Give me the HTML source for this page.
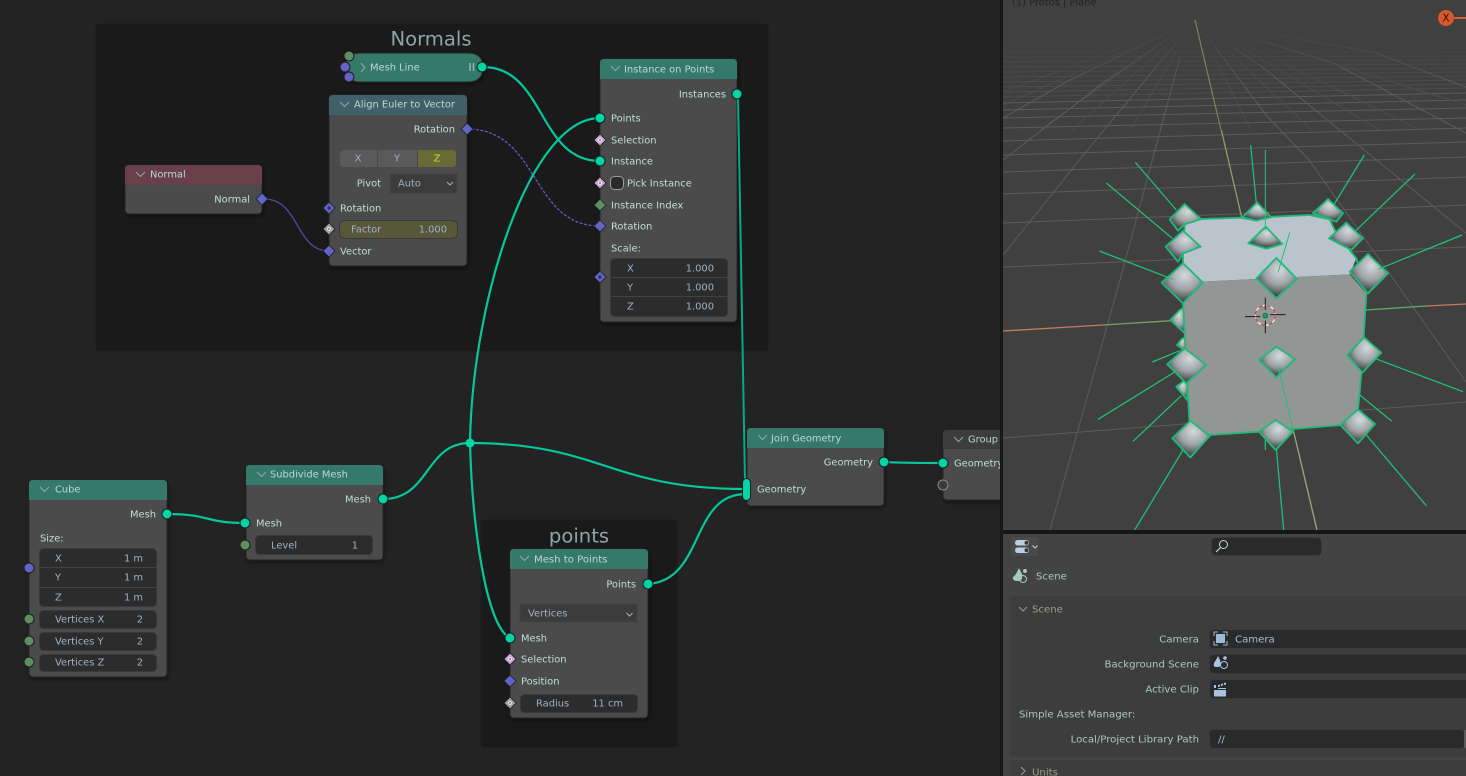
<!DOCTYPE html>
<html><head><meta charset="utf-8"><style>
html,body{margin:0;padding:0;background:#232323;width:1466px;height:776px;overflow:hidden}
svg{display:block;position:absolute;left:0;top:0;filter:blur(.3px)}
text{font-family:"DejaVu Sans","Liberation Sans",sans-serif;font-size:9.9px;fill:#bfdfd9;white-space:pre;transform:translateY(-.5px)}
.h{fill:#bcd8d2}.v{fill:#a0b1c4}.e{text-anchor:end}.m{text-anchor:middle}
.t{font-size:19.6px;fill:#8fa5a5;text-anchor:middle}
.p{fill:#a9c8bc;font-size:10.150px}.pe{fill:#a9c8bc;text-anchor:end;font-size:10.150px}.pv{fill:#a9bdd0;font-size:10.150px}.ph{fill:#9d9d8a;font-size:10.150px}
.ch{fill:none;stroke:#90aaa6;stroke-width:1}
.n{fill:#4b4b4b;stroke:#262626;stroke-width:1;filter:url(#sh)}
.w{fill:none;stroke:#06c69b;stroke-width:2.2}
.f{fill:#2a2a2a;stroke:#3a3a3a;stroke-width:1}
.sp{fill:none;stroke:#1fc07a;stroke-width:3.8}
.d{fill:url(#dg);stroke:#1fba78;stroke-width:5.5;stroke-linejoin:round}
.g{stroke:#5c5c5c;stroke-width:1;fill:none}
.g2{stroke:#505050;stroke-width:.8;fill:none}
</style></head><body>
<svg width="1466" height="776" viewBox="0 0 1466 776" xmlns="http://www.w3.org/2000/svg">
<defs>
<filter id="sh" x="-10%" y="-10%" width="125%" height="125%"><feDropShadow dx="1" dy="2" stdDeviation="2" flood-color="#000" flood-opacity=".45"/></filter>
<radialGradient id="dg" cx=".56" cy=".3" r=".72"><stop offset="0" stop-color="#d4dadc"/><stop offset=".5" stop-color="#9da3a6"/><stop offset=".85" stop-color="#4a4f52"/><stop offset="1" stop-color="#33383a"/></radialGradient>
<linearGradient id="fade" x1="0" y1="0" x2="0" y2="1"><stop offset="0" stop-color="#404040" stop-opacity="1"/><stop offset=".3" stop-color="#404040" stop-opacity=".9"/><stop offset="1" stop-color="#404040" stop-opacity="0"/></linearGradient>
<clipPath id="vp"><rect x="1003" y="0" width="463" height="530"/></clipPath>
<clipPath id="ed"><rect x="0" y="0" width="1000" height="776"/></clipPath>
<g id="sg"><circle r="5" fill="#00d6a3" stroke="#1d1d1d" stroke-width="1"/></g>
<g id="sb"><circle r="5" fill="#6363c7" stroke="#1d1d1d" stroke-width="1"/></g>
<g id="si"><circle r="5" fill="#5f8f5f" stroke="#1d1d1d" stroke-width="1"/></g>
<g id="db"><polygon points="0,-6 6,0 0,6 -6,0" fill="#6363c7" stroke="#1d1d1d" stroke-width=".8"/></g>
<g id="dbd"><polygon points="0,-6 6,0 0,6 -6,0" fill="#6363c7" stroke="#1d1d1d" stroke-width=".8"/><circle r="1.6" fill="#2b2b55"/></g>
<g id="dp"><polygon points="0,-6 6,0 0,6 -6,0" fill="#cca6d6" stroke="#1d1d1d" stroke-width=".8"/><circle r="1.9" fill="#f2edf4"/><circle r=".9" fill="#555"/></g>
<g id="dw"><polygon points="0,-6 6,0 0,6 -6,0" fill="#a1a1a1" stroke="#1d1d1d" stroke-width=".8"/><circle r="1.9" fill="#eee"/><circle r=".9" fill="#555"/></g>
<g id="dg2"><polygon points="0,-6 6,0 0,6 -6,0" fill="#5f8f5f" stroke="#1d1d1d" stroke-width=".8"/></g>
</defs>

<rect x="0" y="0" width="1000" height="776" fill="#232323"/>
<g clip-path="url(#ed)">
<!-- frames -->
<rect x="95.500" y="23.500" width="673" height="328" rx="4" fill="#1a1a1a" stroke="#1f1f1f"/>
<rect x="480.500" y="519.500" width="197" height="228" rx="4" fill="#1a1a1a" stroke="#1f1f1f"/>
<text class="t" x="431" y="46">Normals</text>
<text class="t" x="579" y="543">points</text>

<!-- Normal -->
<rect class="n" x="125" y="165" width="137" height="49" rx="4"/>
<path d="M125 185V169Q125 165 129 165H258Q262 165 262 169V185Z" fill="#693f4c"/>
<path class="ch" d="M136 172l4.500 4.500 4.500-4.500"/>
<text class="h" x="150" y="178">Normal</text>
<text class="e" x="250" y="203">Normal</text>

<!-- Align Euler -->
<rect class="n" x="329" y="95" width="138" height="171" rx="4"/>
<path d="M329 115V99Q329 95 333 95H463Q467 95 467 99V115Z" fill="#3f6068"/>
<path class="ch" d="M340 102l4.500 4.500 4.500-4.500"/>
<text class="h" x="354" y="108">Align Euler to Vector</text>
<text class="e" x="455" y="133">Rotation</text>
<path d="M344 150H377V167H344Q340 167 340 163V154Q340 150 344 150Z" fill="#5a5a5a"/>
<rect x="378" y="150" width="39" height="17" fill="#5a5a5a"/>
<path d="M418 150H452Q456 150 456 154V163Q456 167 452 167H418Z" fill="#686b36"/>
<text class="v m" x="358" y="162">X</text><text class="v m" x="397" y="162">Y</text>
<text class="m" x="437" y="162" style="fill:#d6d62a">Z</text>
<text class="e" x="381" y="187">Pivot</text>
<rect x="390" y="174" width="67" height="19" fill="#3c3c3c" stroke="#434343"/>
<text class="v" x="398" y="187">Auto</text>
<path d="M447 182l3 3 3-3" fill="none" stroke="#a2b3c6"/>
<text x="340" y="212">Rotation</text>
<rect x="339.500" y="220.500" width="118" height="18" rx="5" fill="#57573a" stroke="#393939"/>
<text class="v" x="351" y="233">Factor</text><text class="v e" x="447" y="233">1.000</text>
<text x="340" y="255">Vector</text>

<!-- Instance on Points -->
<rect class="n" x="600" y="59" width="137" height="263" rx="4"/>
<path d="M600 79V63Q600 59 604 59H733Q737 59 737 63V79Z" fill="#35796a"/>
<path class="ch" d="M611 66l4.500 4.500 4.500-4.500"/>
<text class="h" x="624" y="73">Instance on Points</text>
<text class="e" x="726" y="98">Instances</text>
<text x="611" y="122">Points</text>
<text x="611" y="144">Selection</text>
<text x="611" y="165">Instance</text>
<rect x="610.500" y="176.500" width="13" height="13" rx="4" fill="#2b2b2b" stroke="#9a9a9a"/>
<text x="627" y="187">Pick Instance</text>
<text x="611" y="209">Instance Index</text>
<text x="611" y="230">Rotation</text>
<text x="611" y="252">Scale:</text>
<rect x="610.500" y="258.500" width="117" height="58" rx="4" fill="#2c2c2c" stroke="#393939"/>
<path d="M611 277.500H727M611 296.500H727" stroke="#424242"/>
<text class="v" x="627" y="272">X</text><text class="v e" x="714" y="272">1.000</text>
<text class="v" x="627" y="291">Y</text><text class="v e" x="714" y="291">1.000</text>
<text class="v" x="627" y="310">Z</text><text class="v e" x="714" y="310">1.000</text>

<!-- Cube -->
<rect class="n" x="29" y="480" width="138" height="197" rx="4"/>
<path d="M29 500V484Q29 480 33 480H163Q167 480 167 484V500Z" fill="#35796a"/>
<path class="ch" d="M40 487l4.500 4.500 4.500-4.500"/>
<text class="h" x="55" y="493">Cube</text>
<text class="e" x="156" y="518">Mesh</text>
<text x="40" y="542">Size:</text>
<rect x="39.500" y="548.500" width="117" height="58" rx="4" fill="#2c2c2c" stroke="#393939"/>
<path d="M40 567.500H156M40 587.500H156" stroke="#424242"/>
<text class="v" x="55" y="562">X</text><text class="v e" x="143" y="562">1 m</text>
<text class="v" x="55" y="581">Y</text><text class="v e" x="143" y="581">1 m</text>
<text class="v" x="55" y="601">Z</text><text class="v e" x="143" y="601">1 m</text>
<rect x="39.500" y="610.500" width="117" height="18" rx="4" fill="#2c2c2c" stroke="#393939"/>
<rect x="39.500" y="632.500" width="117" height="18" rx="4" fill="#2c2c2c" stroke="#393939"/>
<rect x="39.500" y="654.500" width="117" height="17" rx="4" fill="#2c2c2c" stroke="#393939"/>
<text class="v" x="55" y="623">Vertices X</text><text class="v e" x="143" y="623">2</text>
<text class="v" x="55" y="645">Vertices Y</text><text class="v e" x="143" y="645">2</text>
<text class="v" x="55" y="666">Vertices Z</text><text class="v e" x="143" y="666">2</text>

<!-- Subdivide -->
<rect class="n" x="246" y="465" width="137" height="95" rx="4"/>
<path d="M246 485V469Q246 465 250 465H379Q383 465 383 469V485Z" fill="#35796a"/>
<path class="ch" d="M257 472l4.500 4.500 4.500-4.500"/>
<text class="h" x="270" y="478">Subdivide Mesh</text>
<text class="e" x="371" y="503">Mesh</text>
<text x="256" y="527">Mesh</text>
<rect x="255.500" y="535.500" width="117" height="19" rx="4" fill="#2c2c2c" stroke="#393939"/>
<text class="v" x="271" y="549">Level</text><text class="v e" x="358" y="549">1</text>

<!-- Mesh to Points -->
<rect class="n" x="510" y="549" width="138" height="169" rx="4"/>
<path d="M510 569V553Q510 549 514 549H644Q648 549 648 553V569Z" fill="#35796a"/>
<path class="ch" d="M520 556l4.500 4.500 4.500-4.500"/>
<text class="h" x="534" y="563" style="font-size:10.100px">Mesh to Points</text>
<text class="e" x="636" y="588">Points</text>
<rect x="520" y="604" width="117" height="18" fill="#3c3c3c" stroke="#434343"/>
<text class="v" x="528" y="617">Vertices</text>
<path d="M626.500 613l3 3 3-3" fill="none" stroke="#a2b3c6"/>
<text x="521" y="642">Mesh</text>
<text x="521" y="663">Selection</text>
<text x="521" y="685">Position</text>
<rect x="520.500" y="694.500" width="117" height="18" rx="4" fill="#2c2c2c" stroke="#393939"/>
<text class="v" x="536" y="707">Radius</text><text class="v e" x="623" y="707">11 cm</text>

<!-- Join Geometry -->
<rect class="n" x="747" y="428" width="137" height="78" rx="4"/>
<path d="M747 448V432Q747 428 751 428H880Q884 428 884 432V448Z" fill="#35796a"/>
<path class="ch" d="M758 435l4.500 4.500 4.500-4.500"/>
<text class="h" x="771" y="442">Join Geometry</text>
<text class="e" x="873" y="466">Geometry</text>
<text x="757" y="493">Geometry</text>

<!-- Group -->
<rect class="n" x="943" y="430" width="80" height="70" rx="4"/>
<path d="M943 449V434Q943 430 947 430H1019Q1023 430 1023 434V449Z" fill="#3d3d3d"/>
<path class="ch" d="M954 437l4.500 4.500 4.500-4.500"/>
<text class="h" x="968" y="443">Group</text>
<text x="954" y="467">Geometry</text>

<!-- Mesh Line collapsed -->
<path d="M360 53H468Q483 53 483 67Q483 82 468 82H360Q345 82 345 67Q345 53 360 53Z" fill="#35796a" stroke="#262626" filter="url(#sh)"/>
<path d="M361 63l4 4.500-4 4.500" class="ch"/>
<text class="h" x="370" y="71">Mesh Line</text>
<path d="M470 63V71M473.500 63V71" stroke="#8fb8ac" stroke-width="1.500"/>

<!-- wires -->
<path d="M264 199C300 199 295 251 329 251" fill="none" stroke="#4f4aa8" stroke-width="1.300"/>
<path d="M467 129C540 129 530 226 600 226" fill="none" stroke="#5f5ac2" stroke-width="1.300" stroke-dasharray="3 1.500"/>
<path class="w" d="M483 67C545 67 538 161 600 161"/>
<path class="w" d="M167 514C210 514 205 523 245 523"/>
<path class="w" d="M383 499C430 499 425 443 470 443"/>
<path class="w" d="M470 443C472 300 530 118 600 118"/>
<path class="w" d="M470 443C600 443 610 489 745 489"/>
<path class="w" d="M470 443C472 520 485 625 510 638"/>
<path d="M738 94L745 482" fill="none" stroke="#06a988" stroke-width="2"/>
<path class="w" d="M648 584C705 580 690 494 746 494"/>
<path class="w" d="M884 462C905 463 920 463 943 463"/>
<circle cx="470" cy="443" r="4.500" fill="#00d6a3"/>

<!-- sockets -->
<use href="#si" x="349" y="56"/><use href="#sb" x="345" y="67"/><use href="#sb" x="349" y="77"/>
<use href="#sg" x="482" y="67"/>
<use href="#db" x="262" y="199"/>
<use href="#db" x="467" y="129"/>
<use href="#dbd" x="329" y="208"/>
<use href="#dw" x="329" y="229"/>
<use href="#db" x="329" y="251"/>
<use href="#sg" x="737" y="94"/>
<use href="#sg" x="600" y="118"/>
<use href="#dp" x="600" y="140"/>
<use href="#sg" x="600" y="161"/>
<use href="#dp" x="600" y="183"/>
<use href="#dg2" x="600" y="205"/>
<use href="#db" x="600" y="226"/>
<use href="#dbd" x="600" y="277"/>
<use href="#sg" x="167" y="514"/>
<use href="#sb" x="29" y="568"/>
<use href="#si" x="29" y="619"/><use href="#si" x="29" y="641"/><use href="#si" x="29" y="662"/>
<use href="#sg" x="245" y="523"/>
<use href="#si" x="245" y="545"/>
<use href="#sg" x="383" y="499"/>
<use href="#sg" x="648" y="584"/>
<use href="#sg" x="510" y="638"/>
<use href="#dp" x="510" y="659"/>
<use href="#db" x="510" y="681"/>
<use href="#dw" x="510" y="703"/>
<rect x="742.500" y="478.500" width="8" height="22" rx="4" fill="#00d6a3" stroke="#1d1d1d"/>
<use href="#sg" x="884" y="462"/>
<use href="#sg" x="943" y="463"/>
<circle cx="943" cy="485" r="5" fill="#3a3a3a" stroke="#8a8a8a"/>
</g>

<!-- separators -->
<rect x="1000" y="0" width="3" height="776" fill="#181818"/>

<!-- viewport -->
<g clip-path="url(#vp)">
<rect x="1003" y="0" width="463" height="530" fill="#404040"/>
<!-- grid horizontals -->
<g class="g">
<path d="M1003 438L1466 402M1003 267L1466 247M1003 223L1466 205M1003 194L1466 177M1003 172L1466 157M1003 155L1466 142M1003 141L1466 128M1003 128L1466 118M1003 118L1466 108M1003 110L1466 100M1003 103L1466 93"/>
</g>
<g class="g2">
<path d="M1003 97L1466 88M1003 92L1466 84M1003 87L1466 80M1003 82L1466 76M1003 77L1466 72M1003 72L1466 68M1003 67L1466 64M1003 62L1466 60M1003 57L1466 56M1003 52L1466 52"/>
<path d="M1195 20L1003 92M1195 20L1003 105M1195 20L1040 130M1195 20L1072 130M1195 20L1130 130M1195 20L1251 130M1195 20L1312 130M1195 20L1380 130M1195 20L1420 130M1195 20L1466 105"/>
</g>
<!-- grid radials -->
<g class="g">
<path d="M1050 530L1120 280L1180 57M1003 255L1053 193L1085 153L1195 20M1003 160L1103 83L1195 20M1003 118L1070 80L1195 20M1195 20L1266 115L1309 160L1394 280L1466 382M1195 20L1266 70L1466 233M1195 20L1333 63L1466 133M1195 20L1376 53L1466 87"/>
</g>
<rect x="1003" y="10" width="463" height="75" fill="url(#fade)"/>
<text x="1012" y="6" style="fill:#1c1c1c;font-size:9.9px;opacity:.8">(1) Protos | Plane</text>
<!-- axes -->
<path d="M1195 20L1221 130" stroke="#6e8a56" stroke-width="1.200" fill="none"/>
<g transform="translate(1003 130) scale(.33333)">
<path d="M655 0L716 262" stroke="#8a9e66" stroke-width="4" fill="none"/>
<path d="M870 897L942 1200" stroke="#94a873" stroke-width="4" fill="none"/>
<path d="M0 603L300 585" stroke="#c67a5e" stroke-width="4" fill="none"/>
<path d="M300 585L505 572" stroke="#7d9c5e" stroke-width="4" fill="none"/>
<path d="M1088 540L1270 528" stroke="#5fae66" stroke-width="4" fill="none"/>
<path d="M1270 528L1389 522" stroke="#c67a5e" stroke-width="4" fill="none"/>
<!-- spikes -->
<path class="sp" d="M397 97L520 240M310 159L508 325M289 363L510 448M743 45L760 220M1084 75L992 225M1236 132L1055 305M1377 315L1125 418M448 696L530 662M285 868L525 720M390 934L535 797M395 1200L540 960M842 1200L820 955M787 960L787 930M1270 1127L1090 915M1166 873L1070 795M1380 785L1115 685"/>
<!-- back diamonds -->
<polygon class="d" points="545,222 595,268 545,283 525,302 500,268"/>
<polygon class="d" points="762,217 805,262 760,272 718,262"/>
<polygon class="d" points="975,207 1020,250 1000,275 930,250"/>
<polygon class="d" points="530,540 548,530 548,612 502,570"/>
<polygon class="d" points="535,628 550,620 550,665 522,645"/>
<polygon class="d" points="520,770 553,745 553,810"/>
<!-- cube -->
<path d="M545 283L595 267L715 263L760 272L810 260L920 255L980 268L1000 310L1060 385L1040 433L600 455L540 460L540 370Z" fill="#b9c4cc"/>
<path d="M600 455L1040 433L1090 490L1082 620L1075 730L1065 840L1015 885L870 897L770 905L620 915L560 885L553 760L545 610L540 520Z" fill="#929695"/>
<path d="M545 283L595 267L715 263L760 272L810 260L920 255L980 268L1000 310L1060 385L1090 490L1082 620L1075 730L1065 840L1015 885L870 897L770 905L620 915L560 885L553 760L545 610L540 520L540 370Z" fill="none" stroke="#1fba78" stroke-width="5.500" stroke-linejoin="round"/>
<!-- front diamonds -->
<polygon class="d" points="1030,278 1080,325 1045,360 978,325"/>
<polygon class="d" points="540,302 593,350 540,370 525,395 488,350"/>
<polygon class="d" points="788,290 838,342 790,356 736,340"/>
<polygon class="d" points="540,400 600,458 540,520 476,458"/>
<polygon class="d" points="820,384 882,447 820,505 760,445"/>
<polygon class="d" points="1095,372 1155,430 1095,490 1040,425"/>
<polygon class="d" points="545,655 610,705 550,760 493,703"/>
<polygon class="d" points="820,650 876,687 820,742 768,690"/>
<polygon class="d" points="1083,622 1135,668 1078,728 1033,675"/>
<polygon class="d" points="562,872 620,918 562,982 508,925"/>
<polygon class="d" points="818,870 870,905 818,960 768,905"/>
<polygon class="d" points="1065,838 1116,882 1065,940 1012,885"/>
<!-- inner spikes -->
<path d="M787 60L787 300" stroke="#2ac084" stroke-width="3" fill="none"/>
<path d="M860 308L825 428M825 708L870 897" stroke="#1fc07a" stroke-width="3" fill="none"/>
<path d="M510 448L490 440M1125 418L1140 412M1115 685L1130 690" stroke="#1fc07a" stroke-width="3" fill="none"/>
<!-- 3D cursor -->
<circle cx="787" cy="556" r="30" fill="none" stroke="#ececec" stroke-width="4"/>
<circle cx="787" cy="556" r="30" fill="none" stroke="#dd3b3b" stroke-width="4" stroke-dasharray="12 12"/>
<path d="M787 503V540M787 572V610M726 560H772M802 554H848" stroke="#1a1a1a" stroke-width="3" fill="none"/>
<circle cx="787" cy="557" r="7" fill="#10a060" stroke="#0b5c3a" stroke-width="2"/>
</g>
<!-- gizmo -->
<path d="M1452 18H1466" stroke="#d65d31" stroke-width="2"/>
<circle cx="1446" cy="18" r="8" fill="#d9582a"/>
<text class="m" x="1446" y="22" style="fill:#2a1208;font-size:10.500px">X</text>
</g>

<!-- properties -->
<rect x="1003" y="530" width="463" height="4" fill="#161616"/>
<rect x="1003" y="534" width="463" height="242" fill="#434343"/>
<rect x="1011" y="537" width="27" height="19" rx="2" fill="#4a4a4a"/>
<rect x="1015" y="540" width="14" height="5.500" rx="2.700" fill="#b9cfe3"/><circle cx="1026.500" cy="542.700" r="2" fill="#3b3b3b"/>
<rect x="1015" y="547.500" width="14" height="5.500" rx="2.700" fill="#b9cfe3"/><circle cx="1026.500" cy="550.200" r="2" fill="#3b3b3b"/>
<path d="M1032.500 545.500l2.500 2.500 2.500-2.500" fill="none" stroke="#b9cfe3"/>
<rect x="1211.500" y="537.500" width="110" height="18" rx="4" fill="#2a2a2a" stroke="#3a3a3a"/>
<circle cx="1223.500" cy="544.500" r="4" fill="none" stroke="#c4d4d8"/><path d="M1220.500 547.500L1216 552" stroke="#c4d4d8" stroke-width="1.200"/>
<path d="M1016 574L1019 568L1022 574Q1023 581 1019 581H1016Q1012 580 1013 577Z" fill="#a2c9bb"/><circle cx="1025" cy="571" r="2" fill="#a2c9bb"/><circle cx="1023" cy="579" r="3.500" fill="none" stroke="#a2c9bb"/>
<text class="p" x="1036" y="580">Scene</text>
<rect x="1010" y="596" width="470" height="161" rx="4" fill="#3d3d3d"/>
<rect x="1010" y="760" width="470" height="30" rx="4" fill="#3d3d3d"/>
<path d="M1019 607l4 4 4-4" fill="none" stroke="#999"/>
<text class="ph" x="1032" y="613">Scene</text>
<text class="pe" x="1199" y="643">Camera</text>
<text class="pe" x="1199" y="668">Background Scene</text>
<text class="pe" x="1199" y="693">Active Clip</text>
<text class="p" x="1019" y="718">Simple Asset Manager:</text>
<text class="pe" x="1199" y="743">Local/Project Library Path</text>
<rect class="f" x="1209.500" y="629.500" width="280" height="19" rx="4"/>
<rect class="f" x="1209.500" y="654.500" width="280" height="19" rx="4"/>
<rect class="f" x="1209.500" y="679.500" width="280" height="19" rx="4"/>
<rect class="f" x="1209.500" y="729.500" width="255" height="19" rx="4"/>
<rect x="1464" y="730" width="2" height="18" fill="#5a5a5a"/>
<rect x="1216" y="634" width="9" height="9" fill="#9dbbd8"/>
<path d="M1214 636V632H1218M1223 632H1227V636M1227 641V645H1223M1218 645H1214V641" fill="none" stroke="#9dbbd8"/>
<text class="pv" x="1235" y="643">Camera</text>
<path d="M1216 660L1218 656L1220 660Q1222 667 1218 667H1215Q1212 665 1216 660Z" fill="#a9c3e0"/><circle cx="1225" cy="658" r="1.800" fill="#a9c3e0"/><circle cx="1224" cy="665" r="3.500" fill="none" stroke="#a9c3e0"/>
<rect x="1214" y="690" width="12" height="6.500" fill="#a9c3e0"/><path d="M1214 685h2v3h-2zM1218 685l2-.500v2l-2 .500zM1221 684l2-.500v2l-2 .500zM1224 683l2-.500v2l-2 .500zM1218 688h8v1h-8z" fill="#a9c3e0"/>
<text class="pv" x="1218" y="743">//</text>
<path d="M1021 767l4 4-4 4" fill="none" stroke="#999"/>
<text class="ph" x="1032" y="776">Units</text>
</svg>
</body></html>
